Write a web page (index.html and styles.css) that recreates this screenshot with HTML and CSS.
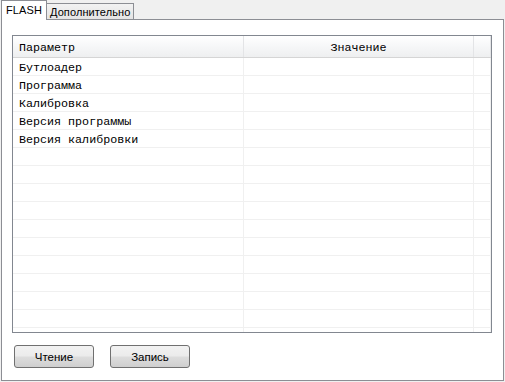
FILE: index.html
```html
<!DOCTYPE html>
<html lang="ru">
<head>
    <meta charset="UTF-8">
    <title>FLASH</title>
    <link rel="stylesheet" href="styles.css">
</head>
<body>
    <div class="tabs">
        <div class="tab active">FLASH</div>
        <div class="tab">Дополнительно</div>
    </div>

    <div class="pane">
        <div class="grid">
            <div class="grid-head">
                <div class="cell col-name">Параметр</div>
                <div class="cell col-value">Значение</div>
                <div class="cell col-rest"></div>
            </div>
            <div class="grid-body">
                <div class="row"><div class="cell col-name">Бутлоадер</div><div class="cell col-value"></div><div class="cell col-rest"></div></div>
                <div class="row"><div class="cell col-name">Программа</div><div class="cell col-value"></div><div class="cell col-rest"></div></div>
                <div class="row"><div class="cell col-name">Калибровка</div><div class="cell col-value"></div><div class="cell col-rest"></div></div>
                <div class="row"><div class="cell col-name">Версия программы</div><div class="cell col-value"></div><div class="cell col-rest"></div></div>
                <div class="row"><div class="cell col-name">Версия калибровки</div><div class="cell col-value"></div><div class="cell col-rest"></div></div>
                <div class="row"><div class="cell col-name"></div><div class="cell col-value"></div><div class="cell col-rest"></div></div>
                <div class="row"><div class="cell col-name"></div><div class="cell col-value"></div><div class="cell col-rest"></div></div>
                <div class="row"><div class="cell col-name"></div><div class="cell col-value"></div><div class="cell col-rest"></div></div>
                <div class="row"><div class="cell col-name"></div><div class="cell col-value"></div><div class="cell col-rest"></div></div>
                <div class="row"><div class="cell col-name"></div><div class="cell col-value"></div><div class="cell col-rest"></div></div>
                <div class="row"><div class="cell col-name"></div><div class="cell col-value"></div><div class="cell col-rest"></div></div>
                <div class="row"><div class="cell col-name"></div><div class="cell col-value"></div><div class="cell col-rest"></div></div>
                <div class="row"><div class="cell col-name"></div><div class="cell col-value"></div><div class="cell col-rest"></div></div>
                <div class="row"><div class="cell col-name"></div><div class="cell col-value"></div><div class="cell col-rest"></div></div>
                <div class="row"><div class="cell col-name"></div><div class="cell col-value"></div><div class="cell col-rest"></div></div>
                <div class="row"><div class="cell col-name"></div><div class="cell col-value"></div><div class="cell col-rest"></div></div>
            </div>
        </div>

        <div class="buttons">
            <button class="btn">Чтение</button>
            <button class="btn">Запись</button>
        </div>
    </div>
</body>
</html>
```

FILE: styles.css
```css
body {
    margin: 0;
    background: #f0f0f0;
    font-family: "Liberation Sans", Arial, sans-serif;
    font-size: 11px;
    color: #000;
}

.tabs {
    display: flex;
    align-items: flex-end;
    height: 20px;
    padding-left: 1px;
    position: relative;
    z-index: 1;
}

.tab {
    box-sizing: border-box;
    height: 16px;
    margin-bottom: 1px;
    padding: 0 3px;
    border: 1px solid #8c8e94;
    border-bottom: none;
    border-left: none;
    background: linear-gradient(to bottom, #f2f2f2, #e4e4e4);
    line-height: 16px;
    letter-spacing: 0.1px;
}

.tab.active {
    height: 20px;
    margin-bottom: 0;
    padding: 0 4px 0 4px;
    border-left: 1px solid #8c8e94;
    background: #fff;
    line-height: 19px;
}

.pane {
    box-sizing: border-box;
    width: 503px;
    height: 362px;
    margin-left: 1px;
    margin-top: -1px;
    padding: 15px 11px 0 10px;
    border: 1px solid #8c8e94;
    background: #fff;
}

.grid {
    box-sizing: border-box;
    width: 480px;
    height: 298px;
    border: 1px solid #828790;
    overflow: hidden;
    font-family: "Liberation Mono", monospace;
    font-size: 11.7px;
}

.grid-head {
    display: flex;
    height: 21px;
    border-bottom: 1px solid #d5d5d5;
    background: linear-gradient(to bottom, #ffffff, #f6f7f8 50%, #eeeff0);
}

.grid-head .cell {
    padding-top: 1px;
    line-height: 22px;
    border-right: 1px solid #e3e4e6;
}

.grid-head .col-value {
    text-align: center;
}

.row {
    display: flex;
    height: 17px;
    border-bottom: 1px solid #f0f0f0;
}

.cell {
    box-sizing: border-box;
    height: 100%;
    padding-left: 6px;
    white-space: nowrap;
    line-height: 21px;
}

.row .cell {
    border-right: 1px solid #f0f0f0;
}

.col-name {
    width: 231px;
}

.col-value {
    width: 230px;
    padding-left: 0;
}

.col-rest {
    flex: 1;
    padding-left: 0;
}

.buttons {
    display: flex;
    gap: 16px;
    margin-top: 12px;
    padding-left: 2px;
}

.btn {
    box-sizing: border-box;
    width: 80px;
    height: 23px;
    padding: 0;
    border: 1px solid #707070;
    border-radius: 3px;
    background: linear-gradient(to bottom, #f2f2f2 0%, #ebebeb 48%, #dddddd 52%, #cfcfcf 100%);
    font-family: "Liberation Sans", Arial, sans-serif;
    font-size: 11.5px;
    color: #000;
}
```
